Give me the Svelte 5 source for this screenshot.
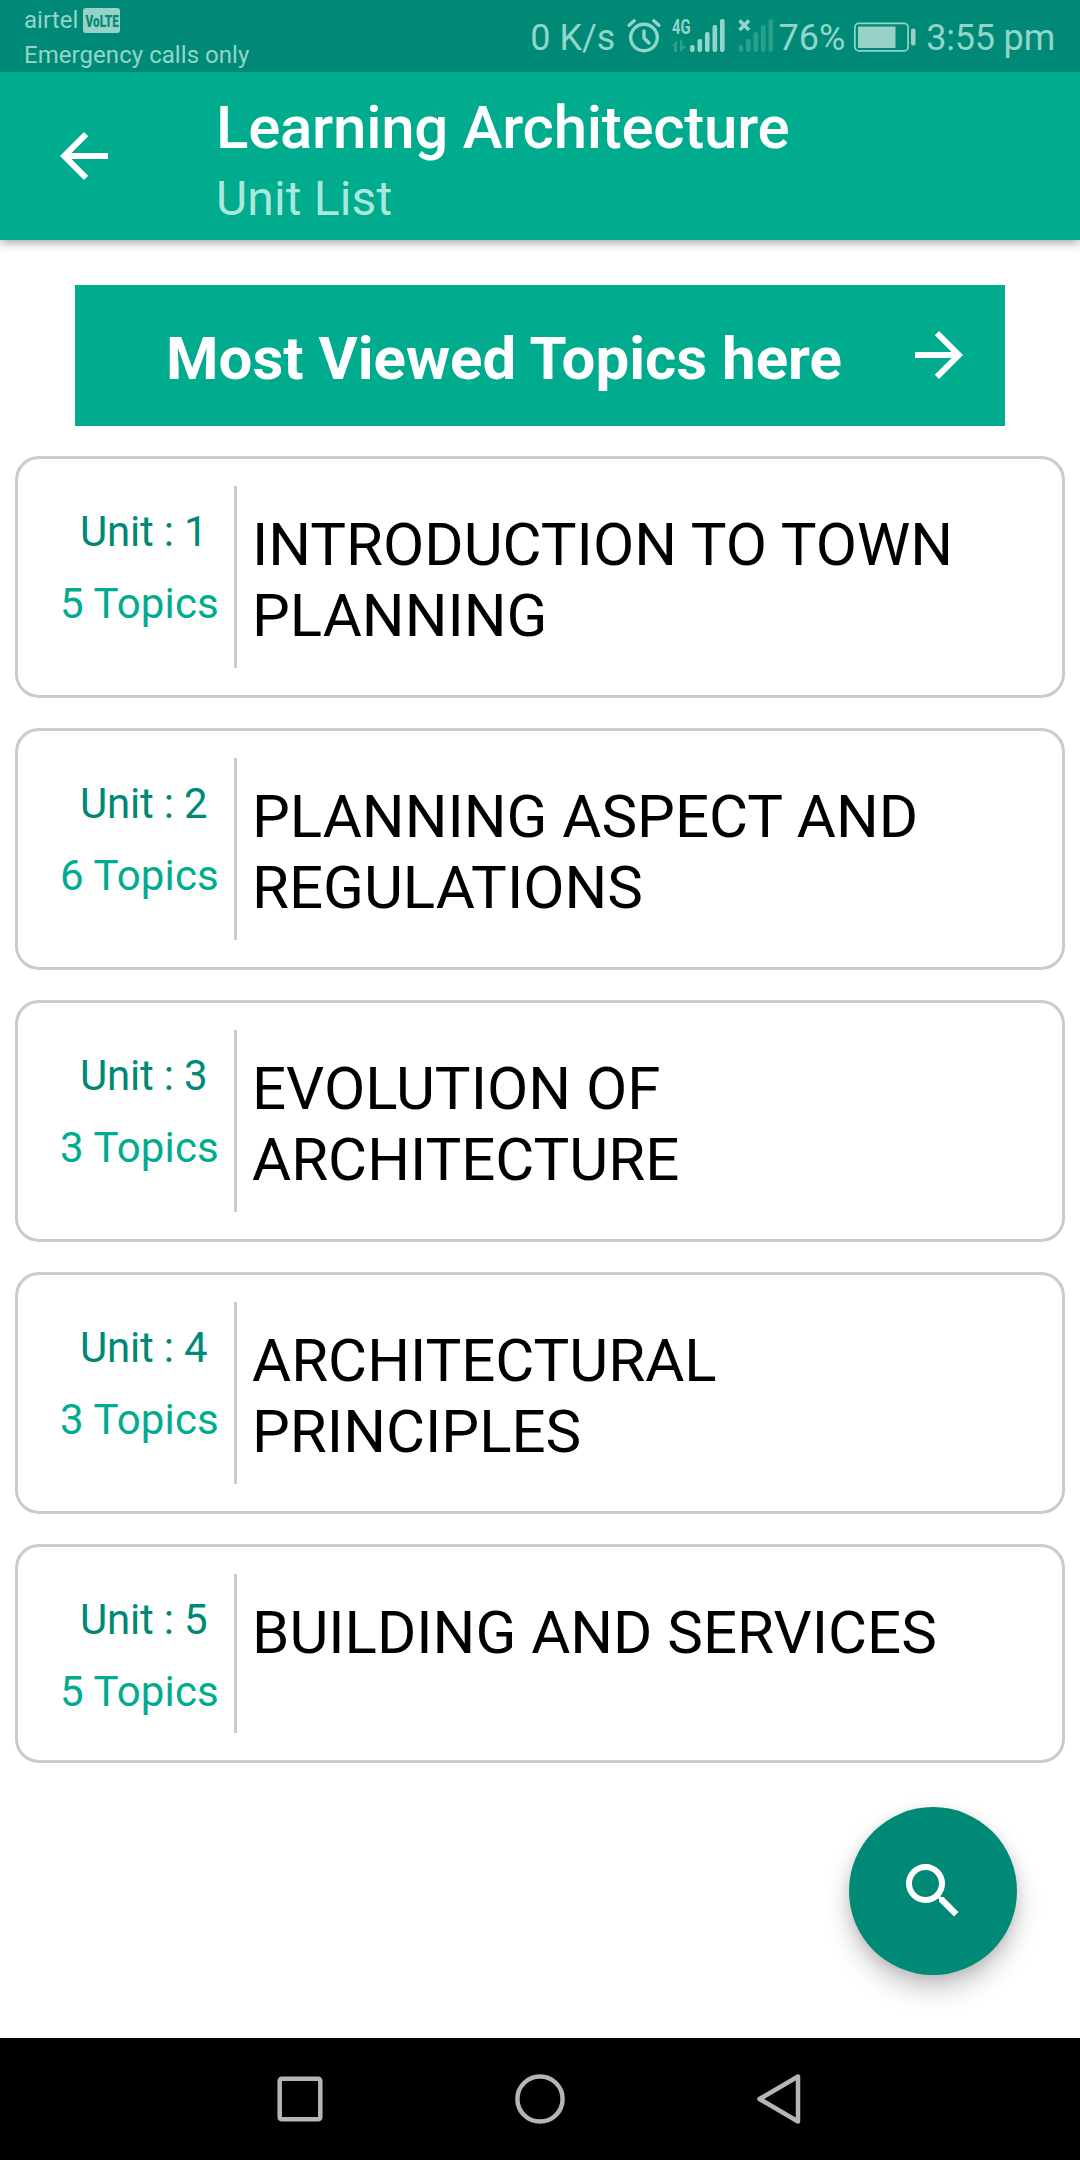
<script>
  const signalBars = [
    { x: 0, top: 26 },
    { x: 7.5, top: 20 },
    { x: 15, top: 13 },
    { x: 22.5, top: 6 },
    { x: 30, top: 0 },
  ];

  const units = [
    { number: 1, topics: 5, title: "INTRODUCTION TO TOWN PLANNING" },
    { number: 2, topics: 6, title: "PLANNING ASPECT AND REGULATIONS" },
    { number: 3, topics: 3, title: "EVOLUTION OF ARCHITECTURE" },
    { number: 4, topics: 3, title: "ARCHITECTURAL PRINCIPLES" },
    { number: 5, topics: 5, title: "BUILDING AND SERVICES" },
  ];
</script>

<div class="screen">
  <div class="status-bar">
    <div class="carrier">
      <div class="carrier-row">
        <span>airtel</span>
        <svg class="volte" width="37" height="25" viewBox="0 0 37 25">
          <rect width="37" height="25" rx="3" fill="#98d2c7" />
          <text transform="translate(2.5 18.5) scale(0.69 1)">VoLTE</text>
        </svg>
      </div>
      <div class="carrier-row">Emergency calls only</div>
    </div>

    <div class="status-right">
      <span class="speed">0 K/s</span>
      <svg class="alarm" width="34" height="34" viewBox="0 0 34 34" fill="none" stroke="#90d6ca" stroke-width="3.4">
        <circle cx="17" cy="18.5" r="13.3" />
        <path d="M17 12v7l5 5" stroke-linecap="round" stroke-linejoin="round" />
        <path d="M2.2 6.3l5-4.5M31.8 6.3l-5-4.5" stroke-linecap="round" />
      </svg>
      <svg class="signal" width="54" height="44" viewBox="0 -10 54 44">
        <text class="network" transform="translate(0 15) scale(0.7 1)">4G</text>
        <path d="M0 27l5-6v12h-3v-6zM8 21h2.500v6h5l-7.500 6z" fill="#2f9f8c" />
        {#each signalBars as bar}
          <rect x={bar.x + 18} y={bar.top} width="4.6" height={33 - bar.top} rx="2" fill="#90d6ca" />
        {/each}
      </svg>
      <svg class="signal-off" width="36" height="34" viewBox="0 0 36 34">
        {#each signalBars as bar}
          <rect x={bar.x + 0.5} y={bar.top} width="4.6" height={33 - bar.top} rx="2" fill="#2a9f8b" />
        {/each}
        <path d="M1.500 1.500l9.500 9.500M11 1.500l-9.500 9.500" stroke="#90d6ca" stroke-width="3.6" />
      </svg>
      <span class="percent">76%</span>
      <svg class="battery" width="62" height="30" viewBox="0 0 62 30">
        <rect x="0.9" y="1.4" width="53.200" height="27.500" rx="4" fill="none" stroke="#90d6ca" stroke-width="1.700" />
        <rect x="4" y="4.500" width="37.500" height="21.500" rx="1" fill="#98d2c7" />
        <rect x="57" y="6.500" width="4.500" height="17" rx="2" fill="#98d2c7" />
      </svg>
      <span class="time">3:55 pm</span>
    </div>
  </div>

  <header class="toolbar">
    <button class="icon-button" aria-label="Back">
      <svg width="72" height="72" viewBox="0 0 24 24" fill="#fff">
        <path d="M20 11H7.830l5.590-5.590L12 4l-8 8 8 8 1.410-1.410L7.830 13H20v-2z" />
      </svg>
    </button>
    <div class="titles">
      <h1>Learning Architecture</h1>
      <p>Unit List</p>
    </div>
  </header>

  <main>
    <button class="most-viewed">
      <span>Most Viewed Topics here</span>
      <svg width="72" height="72" viewBox="0 0 24 24" fill="#fff">
        <path d="M12 4l-1.410 1.410L16.170 11H4v2h12.170l-5.580 5.590L12 20l8-8z" />
      </svg>
    </button>

    <div class="units">
      {#each units as unit}
        <div class="card">
          <div class="info">
            <span class="unit">Unit : {unit.number}</span>
            <span class="topics">{unit.topics} Topics</span>
          </div>
          <div class="title">{unit.title}</div>
        </div>
      {/each}
    </div>

    <button class="fab" aria-label="Search">
      <svg width="72" height="72" viewBox="0 0 24 24" fill="#fff">
        <path
          d="M15.500 14h-.79l-.28-.27A6.471 6.471 0 0 0 16 9.500 6.500 6.500 0 1 0 9.500 16c1.610 0 3.090-.59 4.230-1.570l.27.28v.79l5 4.990L20.490 19l-4.990-5zm-6 0C7.010 14 5 11.990 5 9.500S7.010 5 9.500 5 14 7.010 14 9.500 11.990 14 9.500 14z"
        />
      </svg>
    </button>
  </main>

  <nav class="nav-bar">
    <svg width="52" height="52" viewBox="0 0 52 52">
      <rect x="5.700" y="5.700" width="40.600" height="40.600" rx="2" />
    </svg>
    <svg width="52" height="52" viewBox="0 0 52 52">
      <circle cx="26" cy="26" r="22.600" />
    </svg>
    <svg width="52" height="52" viewBox="0 0 52 52">
      <path d="M44 3.500v45L5.500 26z" />
    </svg>
  </nav>
</div>

<style>
  :global(body) {
    margin: 0;
    background: #fff;
  }

  .screen {
    width: 1080px;
    height: 2160px;
    display: flex;
    flex-direction: column;
    overflow: hidden;
    background: #fff;
    font-family: Roboto, "Liberation Sans", sans-serif;
  }

  button {
    border: none;
    padding: 0;
    font: inherit;
    color: inherit;
    background: none;
  }

  svg {
    display: block;
    flex: none;
  }

  .status-bar {
    height: 72px;
    flex: none;
    box-sizing: border-box;
    position: relative;
    z-index: 2;
    display: flex;
    justify-content: space-between;
    padding: 0 25px 0 24px;
    background: #008976;
    color: #90d6ca;
    white-space: nowrap;
  }

  .carrier {
    display: flex;
    flex-direction: column;
    padding-top: 3px;
    font-size: 24px;
    line-height: 35px;
    letter-spacing: 0.05px;
  }

  .carrier-row {
    display: flex;
    height: 35px;
  }

  .volte {
    margin: 5px 0 0 5px;
    overflow: visible;
  }

  .volte text {
    font-size: 17px;
    font-weight: 900;
    fill: #008976;
  }

  .status-right {
    display: flex;
    font-size: 36px;
    line-height: 42px;
    padding-top: 17px;
  }

  .alarm {
    margin: 2px 0 0 12px;
  }

  .signal {
    margin: -8px 0 0 11px;
    overflow: visible;
  }

  .network {
    font-size: 21px;
    font-weight: 700;
    fill: #90d6ca;
  }

  .signal-off {
    margin: 2px 0 0 12px;
  }

  .percent {
    margin-left: 4px;
  }

  .battery {
    margin: 5px 0 0 9px;
  }

  .time {
    margin-left: 10px;
    letter-spacing: -0.2px;
  }

  .toolbar {
    height: 168px;
    flex: none;
    position: relative;
    z-index: 1;
    display: flex;
    align-items: center;
    background: #00ab8e;
    box-shadow: 0 2px 10px rgba(0, 0, 0, 0.4);
  }

  .icon-button {
    margin-left: 48px;
  }

  .titles {
    margin-left: 96px;
    padding-top: 8px;
  }

  h1 {
    margin: 0;
    font-size: 60px;
    font-weight: 500;
    line-height: 70px;
    letter-spacing: -0.27px;
    color: #fff;
  }

  .titles p {
    margin: 8px 0 0;
    font-size: 48px;
    line-height: 56px;
    letter-spacing: 0.15px;
    color: #a9e8dd;
  }

  main {
    flex: 1;
    display: flex;
    flex-direction: column;
    padding: 45px 15px 0;
  }

  .most-viewed {
    height: 141px;
    margin: 0 60px;
    padding: 0 30px 0 91px;
    display: flex;
    align-items: center;
    justify-content: space-between;
    background: #00ab8e;
    color: #fff;
    font-size: 60px;
    font-weight: 700;
    line-height: 70px;
  }

  .most-viewed span {
    padding-top: 6px;
  }

  .most-viewed svg {
    margin-bottom: 2px;
  }

  .units {
    display: flex;
    flex-direction: column;
    gap: 30px;
    margin-top: 30px;
  }

  .card {
    box-sizing: border-box;
    min-height: 219px;
    display: flex;
    padding: 27px 45px 27px 42px;
    border: 3px solid #cbcbcb;
    border-radius: 24px;
    background: #fff;
  }

  .info {
    box-sizing: border-box;
    width: 177px;
    flex: none;
    display: flex;
    flex-direction: column;
    gap: 23px;
    padding-top: 21px;
    border-right: 3px solid #cbcbcb;
    font-size: 42px;
    line-height: 49px;
  }

  .unit {
    margin-left: 20px;
    letter-spacing: -0.2px;
    color: #008976;
  }

  .topics {
    letter-spacing: 0.15px;
    color: #00ab8e;
  }

  .title {
    padding: 23px 0 17px 15px;
    font-size: 60px;
    line-height: 71px;
    color: #000;
  }

  .fab {
    width: 168px;
    height: 168px;
    margin: auto 48px 63px auto;
    display: flex;
    align-items: center;
    justify-content: center;
    border-radius: 50%;
    background: #008976;
    box-shadow: 0 14px 26px rgba(0, 0, 0, 0.22), 0 3px 12px rgba(0, 0, 0, 0.1);
  }

  .nav-bar {
    height: 122px;
    flex: none;
    display: flex;
    justify-content: center;
    align-items: center;
    gap: 188px;
    background: #000;
  }

  .nav-bar svg {
    fill: none;
    stroke: #b5b5b5;
    stroke-width: 4.500;
    stroke-linejoin: round;
  }
</style>
